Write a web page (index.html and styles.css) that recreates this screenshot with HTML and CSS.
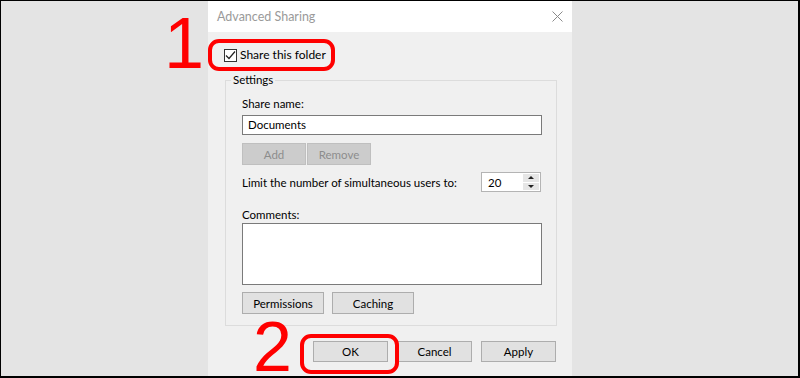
FILE: index.html
```html
<!DOCTYPE html>
<html lang="en">
<head>
  <meta charset="UTF-8" />
  <title>Advanced Sharing</title>
  <link rel="stylesheet" href="styles.css">
</head>
<body>
  <div class="page">
    <div class="dialog">
      <div class="titlebar">
        <span class="title">Advanced Sharing</span>
        <svg class="close" width="11" height="11" viewBox="0 0 11 11">
          <path d="M0.5 0.5 L10.5 10.5 M10.5 0.5 L0.5 10.5" stroke="#8a8a8a" stroke-width="1" fill="none"/>
        </svg>
      </div>

      <div class="content">
        <label class="share-row">
          <span class="checkbox">
            <svg width="11" height="11" viewBox="0 0 11 11">
              <path d="M1 5.5 L4 8.5 L10 1.5" stroke="#222" stroke-width="1.2" fill="none"/>
            </svg>
          </span>
          Share this folder
        </label>

        <div class="group">
          <span class="legend">Settings</span>

          <div class="label first">Share name:</div>
          <div class="textbox">Documents</div>

          <div class="btn-row">
            <button class="btn small" disabled>Add</button>
            <button class="btn small" disabled>Remove</button>
          </div>

          <div class="limit-row">
            <span>Limit the number of simultaneous users to:</span>
            <div class="spinner">
              <span class="spin-value">20</span>
              <span class="spin-btns">
                <span class="spin up"></span>
                <span class="spin down"></span>
              </span>
            </div>
          </div>

          <div class="label">Comments:</div>
          <div class="textarea"></div>

          <div class="btn-row bottom">
            <button class="btn perm">Permissions</button>
            <button class="btn perm">Caching</button>
          </div>
        </div>

        <div class="actions">
          <button class="btn action">OK</button>
          <button class="btn action">Cancel</button>
          <button class="btn action">Apply</button>
        </div>
      </div>
    </div>

    <!-- red step markers -->
    <div class="step step-1">1</div>
    <div class="step step-2">2</div>
    <div class="ring ring-1"></div>
    <div class="ring ring-2"></div>
  </div>
</body>
</html>
```

FILE: styles.css
```css
html, body {
  margin: 0;
  padding: 0;
}

body {
  width: 800px;
  height: 378px;
  overflow: hidden;
  font-family: Lato, "Liberation Sans", sans-serif;
  font-size: 11.5px;
  color: #000;
  white-space: nowrap;
}

.page {
  position: relative;
  box-sizing: border-box;
  width: 800px;
  height: 378px;
  border: 1px solid #000;
  border-right-width: 2px;
  border-bottom-width: 2px;
  background-color: #e4e4e4;
  padding-left: 207px;
  overflow: hidden;
}

.dialog {
  width: 364px;
  height: 100%;
  background-color: #f0f0f0;
  display: flex;
  flex-direction: column;
}

.titlebar {
  height: 31px;
  background-color: #fff;
  display: flex;
  align-items: center;
  justify-content: space-between;
  padding: 0 9px 0 9px;
}

.title {
  color: #9a9a9a;
  font-size: 12.5px;
}

.close {
  display: block;
}

.content {
  padding: 15px 16px 0 16px;
}

.share-row {
  display: flex;
  align-items: center;
  height: 16px;
  line-height: 16px;
  font-size: 12px;
}

.checkbox {
  box-sizing: border-box;
  width: 13px;
  height: 13px;
  border: 1px solid #333;
  background-color: #fff;
  margin-right: 3px;
  display: flex;
  align-items: center;
  justify-content: center;
}

.checkbox svg {
  display: block;
}

.group {
  position: relative;
  box-sizing: border-box;
  width: 332px;
  height: 246px;
  margin: 17px 0 0 1px;
  border: 1px solid #dcdcdc;
  padding: 0 15px 0 16px;
}

.legend {
  position: absolute;
  top: -9px;
  left: 5px;
  padding: 0 2px;
  background-color: #f0f0f0;
  line-height: 16px;
}

.label {
  line-height: 16px;
  height: 16px;
}

.label.first {
  margin-top: 15px;
}

.textbox {
  box-sizing: border-box;
  width: 300px;
  height: 20px;
  margin-top: 3px;
  border: 1px solid #7a7a7a;
  background-color: #fff;
  padding-left: 5px;
  line-height: 18px;
}

.btn-row {
  display: flex;
  gap: 1px;
  margin-top: 8px;
}

.btn {
  box-sizing: border-box;
  font-family: inherit;
  font-size: 11.5px;
  height: 22px;
  padding: 0;
  border: 1px solid #adadad;
  background-color: #e1e1e1;
  color: #000;
}

.btn.small {
  width: 64px;
  background-color: #cccccc;
  border-color: #bfbfbf;
  color: #8c8c8c;
}

.limit-row {
  display: flex;
  align-items: center;
  justify-content: space-between;
  margin-top: 7px;
  height: 20px;
}

.spinner {
  box-sizing: border-box;
  width: 60px;
  height: 20px;
  border: 1px solid #b4b4b4;
  background-color: #fff;
  display: flex;
  align-items: center;
  justify-content: space-between;
  padding: 1px 1px 1px 6px;
}

.spin-value {
  line-height: 16px;
  padding-top: 2px;
}

.spin-btns {
  width: 16px;
  height: 16px;
  display: flex;
  flex-direction: column;
  gap: 1px;
}

.spin {
  flex: 1;
  background-color: #e6e6e6;
  display: flex;
  align-items: center;
  justify-content: center;
}

.spin::after {
  content: "";
  width: 0;
  height: 0;
  border-left: 3px solid transparent;
  border-right: 3px solid transparent;
}

.spin.up::after {
  border-bottom: 3px solid #222;
}

.spin.down::after {
  border-top: 3px solid #222;
}

.limit-row + .label {
  margin-top: 15px;
}

.textarea {
  box-sizing: border-box;
  width: 300px;
  height: 62px;
  border: 1px solid #7a7a7a;
  background-color: #fff;
}

.btn-row.bottom {
  gap: 8px;
  margin-top: 7px;
}

.btn.perm {
  width: 82px;
}

.actions {
  display: flex;
  justify-content: flex-end;
  gap: 9px;
  margin-top: 15px;
}

.btn.action {
  width: 75px;
  height: 21px;
}

.step {
  position: absolute;
  font-family: "Liberation Sans", Arial, sans-serif;
  color: #ff0000;
  line-height: 0.72;
}

.step-1 {
  left: 163px;
  top: 17px;
  font-size: 72px;
}

.step-2 {
  left: 252px;
  top: 321px;
  font-size: 70px;
}

.ring {
  position: absolute;
  box-sizing: border-box;
  border: 4px solid #ff0000;
  border-radius: 11px;
}

.ring-1 {
  left: 207px;
  top: 38px;
  width: 127px;
  height: 32px;
}

.ring-2 {
  left: 299px;
  top: 333px;
  width: 99px;
  height: 40px;
}
```
